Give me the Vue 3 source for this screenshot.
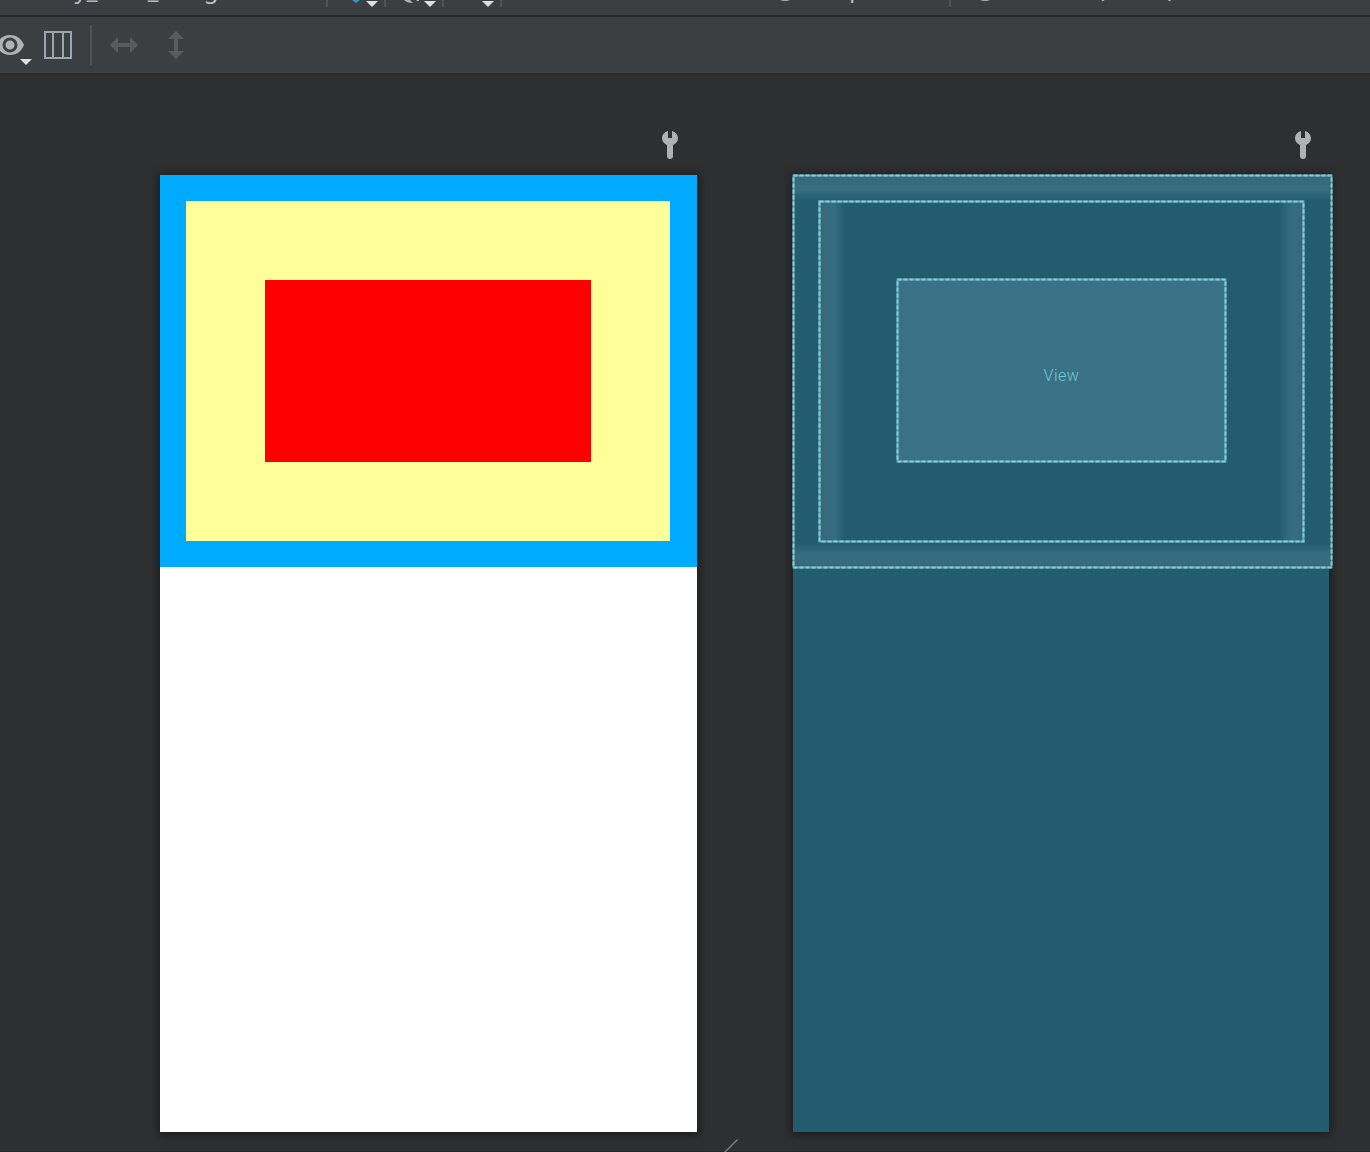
<script setup>
const outlines = [
  { x: 1.5, y: 1.5, w: 538, h: 392 },
  { x: 27.5, y: 27.5, w: 484, h: 340 },
  { x: 105.5, y: 105.5, w: 328, h: 182 },
]
</script>

<template>
  <div class="editor">
    <header class="bar tabs">
      <span class="label file">my_view_margin</span>
      <i class="sep s1"></i>
      <svg class="layers" width="10" height="3"><path d="M1 0h8L5 3z" fill="#3592c4" /></svg>
      <svg class="arrow a1" width="12" height="6"><path d="M0 0h12L6 6z" /></svg>
      <i class="sep s2"></i>
      <svg class="rotate" width="18" height="3"><path d="M1 0h6l3 3C6 3 3 2 1 0zM13 0h3v1h-2z" fill="#afb1b3" /></svg>
      <svg class="arrow a2" width="12" height="6"><path d="M0 0h12L6 6z" /></svg>
      <i class="sep s3"></i>
      <svg class="arrow a3" width="12" height="6"><path d="M0 0h12L6 6z" /></svg>
      <i class="sep s4"></i>
      <i class="disc d1"></i>
      <span class="label theme">Sample</span>
      <i class="sep s5"></i>
      <i class="disc d2"></i>
      <span class="label locale">Default (en-us)</span>
    </header>

    <div class="bar tools">
      <svg class="eye" width="33" height="56" viewBox="0 0 33 56">
        <path d="M-4 28C-1 21 4 18 10 18s11 3 14 10c-3 7-8 10-14 10S-1 35-4 28z" fill="#afb1b3" />
        <circle cx="10" cy="28" r="6" fill="none" stroke="#3c3f41" stroke-width="3" />
        <path d="M20 42h12l-6 6z" fill="#dfdfe1" />
      </svg>
      <svg class="columns" width="28" height="28" viewBox="0 0 28 28" fill="none" stroke="#9aa7b0" stroke-width="2">
        <path d="M1 1h26v26H1zM9 1v26M19 1v26" />
      </svg>
      <i class="divider"></i>
      <svg class="horizontal" width="28" height="16" viewBox="0 0 28 16" fill="#5b5b5b">
        <path d="M0 8l8-8v6h12V0l8 8-8 8v-6H8v6z" />
      </svg>
      <svg class="vertical" width="16" height="28" viewBox="0 0 16 28" fill="#5b5b5b">
        <path d="M8 0l8 8h-6v12h6l-8 8-8-8h6V8H0z" />
      </svg>
    </div>

    <main class="canvas">
      <section class="preview design">
        <svg class="wrench" width="16" height="29" viewBox="0 0 16 29">
          <path d="M6 .9V8h4V.9c3.700 1 6 4 6 7.400 0 3.200-2 5.300-5 6.700V26a3 3 0 0 1-6 0V15c-3-1.400-5-3.500-5-6.700C0 4.900 2.300 1.900 6 .9z" fill="#afb1b3" />
        </svg>
        <div class="sheet white">
          <div class="blue"><div class="yellow"><div class="red"></div></div></div>
        </div>
      </section>

      <section class="preview blueprint">
        <svg class="wrench" width="16" height="29" viewBox="0 0 16 29">
          <path d="M6 .9V8h4V.9c3.700 1 6 4 6 7.400 0 3.200-2 5.300-5 6.700V26a3 3 0 0 1-6 0V15c-3-1.400-5-3.500-5-6.700C0 4.900 2.300 1.900 6 .9z" fill="#afb1b3" />
        </svg>
        <div class="sheet teal">
          <div class="outer-fade">
            <div class="inner-fade"><div class="view">View</div></div>
          </div>
          <svg class="outlines" width="542" height="396" fill="none">
            <g v-for="o in outlines" :key="o.x" stroke-width="2">
              <rect :x="o.x" :y="o.y" :width="o.w" :height="o.h" stroke="#62a4b3" />
              <rect :x="o.x" :y="o.y" :width="o.w" :height="o.h" stroke="#81cce0" stroke-dasharray="4 2" />
            </g>
          </svg>
        </div>
      </section>
      <svg class="grip" width="14" height="14"><path d="M0 14L13.500 .5" stroke="#85878a" stroke-width="1.200" /></svg>
    </main>
  </div>
</template>

<style>
body { margin: 0; background: #2e2f31; }
</style>

<style scoped>
.editor { display: flex; flex-direction: column; width: 1370px; height: 1152px; overflow: hidden; background: #2e2f31; font-family: "Noto Sans", sans-serif; }
.bar { display: flex; flex: none; background: #3c3f41; border-bottom: 2px solid #292a2b; overflow: hidden; }
svg { display: block; flex: none; }

.tabs { height: 15px; align-items: flex-start; }
.label { flex: none; font-size: 24px; line-height: 24px; margin-top: -24px; color: #bbb; white-space: nowrap; }
.file { width: 274px; height: 27px; margin: -23px 0 0 52px; overflow: hidden; }
.theme { width: 149px; margin-left: 10px; }
.locale { margin-left: 19px; }
.sep { flex: none; width: 2px; height: 7px; background: #515355; }
.layers { margin-left: 23px; }
.arrow { margin-top: 1px; fill: #dfdfe1; }
.a1 { margin-left: 5px; }
.s2 { margin-left: 6px; }
.rotate { margin-left: 17px; }
.a2 { margin-left: 3px; }
.s3 { margin-left: 6px; }
.a3 { margin-left: 38px; }
.s4 { margin-left: 6px; }
.disc { flex: none; width: 10px; height: 1px; background: linear-gradient(90deg, #3c3f41, #a5a8aa 30%, #a5a8aa 70%, #3c3f41); }
.d1 { margin-left: 278px; }
.d2 { margin-left: 29px; }

.tools { height: 56px; align-items: center; }
.columns { margin-left: 11px; }
.divider { width: 2px; height: 40px; margin-left: 18px; background: #515151; }
.horizontal { margin-left: 18px; }
.vertical { margin-left: 30px; }

.canvas { position: relative; display: flex; flex: 1; box-sizing: border-box; padding-top: 55px; border-bottom: 1px solid #282427; }
.preview { display: flex; flex-direction: column; flex: none; }
.design { width: 537px; margin-left: 160px; }
.blueprint { width: 536px; margin-left: 96px; }
.wrench { align-self: flex-end; margin: 0 19px 16px 0; }
.blueprint .wrench { margin-right: 18px; }
.sheet { position: relative; height: 957px; box-shadow: 0 1px 9px 2px rgba(0, 0, 0, 0.42); }
.white { background: #fff; }
.teal { background: #235c6f; }
.blue { height: 392px; box-sizing: border-box; padding: 26px 27px 26px 26px; background: #00aaff; }
.yellow { height: 340px; box-sizing: border-box; padding: 79px; background: #ffff99; }
.red { height: 182px; background: #f00; }
.outer-fade { width: 537px; height: 393px; box-sizing: border-box; padding: 26px; background: linear-gradient(#386779, #356e80 15px, #235c6f 25px, #235c6f 368px, #356e80 380px, #386779); }
.inner-fade { width: 485px; height: 341px; box-sizing: border-box; padding: 78px; background: linear-gradient(90deg, #386779, #356e80 16px, #235c6f 25px, #235c6f 460px, #356e80 472px, #386779); }
.view { display: flex; align-items: center; justify-content: center; width: 329px; height: 183px; padding-top: 11px; box-sizing: border-box; background: #397286; color: #78c5d6; font: 300 16px/20px Roboto, sans-serif; letter-spacing: 0.5px; }
.outlines { position: absolute; top: -1px; left: -1px; }
.grip { position: absolute; left: 724px; bottom: -2px; }
</style>
